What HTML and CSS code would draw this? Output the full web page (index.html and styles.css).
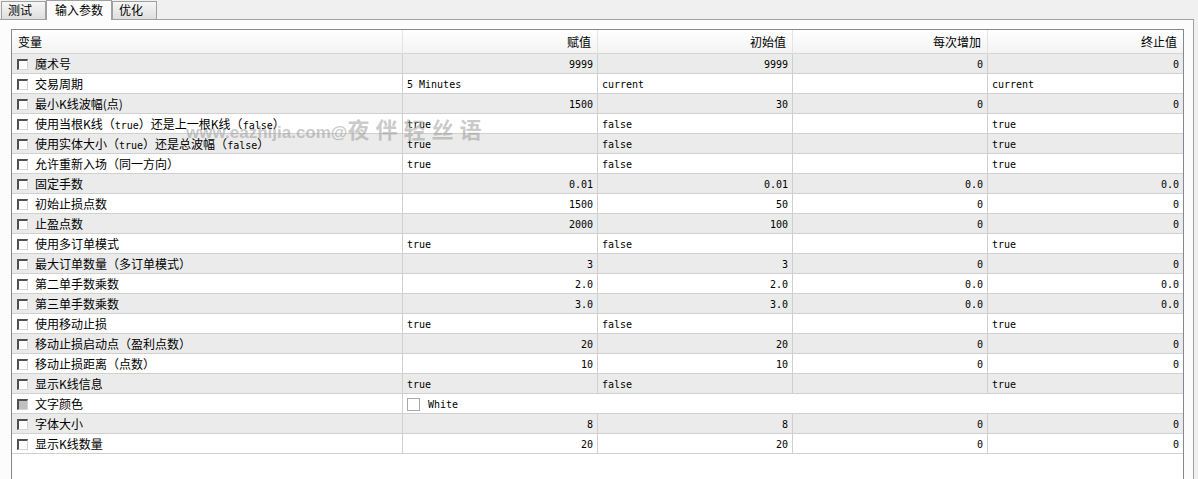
FILE: index.html
```html
<!DOCTYPE html>
<html lang="zh-CN">
<head>
    <meta charset="UTF-8">
    <title>输入参数</title>
    <link rel="stylesheet" href="styles.css">
</head>
<body>
    <div class="tabs">
        <div class="tab">测试</div>
        <div class="tab active">输入参数</div>
        <div class="tab">优化</div>
    </div>

    <div class="panel">
        <div class="listbox">
            <table class="params">
                <colgroup>
                    <col class="col-name">
                    <col class="col-val">
                    <col class="col-val">
                    <col class="col-val">
                    <col class="col-val">
                </colgroup>
                <thead>
                    <tr>
                        <th class="name">变量</th>
                        <th>赋值</th>
                        <th>初始值</th>
                        <th>每次增加</th>
                        <th class="last">终止值</th>
                    </tr>
                </thead>
                <tbody>
                    <tr class="odd">
                        <td class="name"><span class="check"></span>魔术号</td>
                        <td class="num">9999</td><td class="num">9999</td><td class="num">0</td><td class="num last">0</td>
                    </tr>
                    <tr>
                        <td class="name"><span class="check"></span>交易周期</td>
                        <td class="txt">5 Minutes</td><td class="txt">current</td><td class="txt"></td><td class="txt last">current</td>
                    </tr>
                    <tr class="odd">
                        <td class="name"><span class="check"></span>最小K线波幅(点)</td>
                        <td class="num">1500</td><td class="num">30</td><td class="num">0</td><td class="num last">0</td>
                    </tr>
                    <tr>
                        <td class="name"><span class="check"></span>使用当根K线（<span class="mono">true</span>）还是上一根K线（<span class="mono">false</span>）</td>
                        <td class="txt">true</td><td class="txt">false</td><td class="txt"></td><td class="txt last">true</td>
                    </tr>
                    <tr class="odd">
                        <td class="name"><span class="check"></span>使用实体大小（<span class="mono">true</span>）还是总波幅（<span class="mono">false</span>）</td>
                        <td class="txt">true</td><td class="txt">false</td><td class="txt"></td><td class="txt last">true</td>
                    </tr>
                    <tr>
                        <td class="name"><span class="check"></span>允许重新入场（同一方向）</td>
                        <td class="txt">true</td><td class="txt">false</td><td class="txt"></td><td class="txt last">true</td>
                    </tr>
                    <tr class="odd">
                        <td class="name"><span class="check"></span>固定手数</td>
                        <td class="num">0.01</td><td class="num">0.01</td><td class="num">0.0</td><td class="num last">0.0</td>
                    </tr>
                    <tr>
                        <td class="name"><span class="check"></span>初始止损点数</td>
                        <td class="num">1500</td><td class="num">50</td><td class="num">0</td><td class="num last">0</td>
                    </tr>
                    <tr class="odd">
                        <td class="name"><span class="check"></span>止盈点数</td>
                        <td class="num">2000</td><td class="num">100</td><td class="num">0</td><td class="num last">0</td>
                    </tr>
                    <tr>
                        <td class="name"><span class="check"></span>使用多订单模式</td>
                        <td class="txt">true</td><td class="txt">false</td><td class="txt"></td><td class="txt last">true</td>
                    </tr>
                    <tr class="odd">
                        <td class="name"><span class="check"></span>最大订单数量（多订单模式）</td>
                        <td class="num">3</td><td class="num">3</td><td class="num">0</td><td class="num last">0</td>
                    </tr>
                    <tr>
                        <td class="name"><span class="check"></span>第二单手数乘数</td>
                        <td class="num">2.0</td><td class="num">2.0</td><td class="num">0.0</td><td class="num last">0.0</td>
                    </tr>
                    <tr class="odd">
                        <td class="name"><span class="check"></span>第三单手数乘数</td>
                        <td class="num">3.0</td><td class="num">3.0</td><td class="num">0.0</td><td class="num last">0.0</td>
                    </tr>
                    <tr>
                        <td class="name"><span class="check"></span>使用移动止损</td>
                        <td class="txt">true</td><td class="txt">false</td><td class="txt"></td><td class="txt last">true</td>
                    </tr>
                    <tr class="odd">
                        <td class="name"><span class="check"></span>移动止损启动点（盈利点数）</td>
                        <td class="num">20</td><td class="num">20</td><td class="num">0</td><td class="num last">0</td>
                    </tr>
                    <tr>
                        <td class="name"><span class="check"></span>移动止损距离（点数）</td>
                        <td class="num">10</td><td class="num">10</td><td class="num">0</td><td class="num last">0</td>
                    </tr>
                    <tr class="odd">
                        <td class="name"><span class="check"></span>显示K线信息</td>
                        <td class="txt">true</td><td class="txt">false</td><td class="txt"></td><td class="txt last">true</td>
                    </tr>
                    <tr>
                        <td class="name"><span class="check disabled"></span>文字颜色</td>
                        <td class="txt last" colspan="4"><span class="swatch"></span>White</td>
                    </tr>
                    <tr class="odd">
                        <td class="name"><span class="check"></span>字体大小</td>
                        <td class="num">8</td><td class="num">8</td><td class="num">0</td><td class="num last">0</td>
                    </tr>
                    <tr>
                        <td class="name"><span class="check"></span>显示K线数量</td>
                        <td class="num">20</td><td class="num">20</td><td class="num">0</td><td class="num last">0</td>
                    </tr>
                </tbody>
            </table>
        </div>
    </div>

    <div class="watermark">www.eazhijia.com@<span class="wm-cjk">夜伴轻丝语</span></div>
</body>
</html>
```

FILE: styles.css
```css
body {
    margin: 0;
    background-color: #f0f0f0;
    font-family: "Noto Sans CJK SC", sans-serif;
    font-size: 12px;
    color: #000;
    overflow: hidden;
    height: 479px;
}

/* tab strip */
.tabs {
    display: flex;
    align-items: flex-end;
    height: 19px;
    padding-left: 1px;
}

.tab {
    box-sizing: border-box;
    height: 18px;
    min-width: 45px;
    padding: 0 6px;
    border: 1px solid #a0a0a0;
    border-bottom: none;
    background: linear-gradient(#f6f6f6, #dedede);
    line-height: 16px;
}

.tab.active {
    position: relative;
    z-index: 1;
    height: 20px;
    margin-bottom: -1px;
    padding: 0 8px;
    background: #fcfcfc;
    line-height: 18px;
}

/* panel + list */
.panel {
    box-sizing: border-box;
    width: 1194px;
    height: 470px;
    padding: 9px 0 0 11px;
    border-top: 1px solid #a0a0a0;
    border-right: 1px solid #a0a0a0;
    background-color: #fcfcfc;
}

.listbox {
    box-sizing: border-box;
    width: 1173px;
    height: 470px;
    border: 1px solid #828790;
    background-color: #fff;
}

.params {
    width: 1171px;
    table-layout: fixed;
    border-collapse: separate;
    border-spacing: 0;
}

.col-name {
    width: 391px;
}

.col-val {
    width: 195px;
}

th, td {
    box-sizing: border-box;
    white-space: nowrap;
    overflow: hidden;
}

th {
    height: 24px;
    padding: 0 6px;
    font-weight: normal;
    text-align: right;
    border-right: 1px solid #e4e4e4;
    border-bottom: 1px solid #d5d5d5;
    background: linear-gradient(#ffffff, #f3f3f3);
}

th.name {
    text-align: left;
}

td {
    height: 20px;
    padding: 0 4px;
    border-right: 1px solid #d0d0d0;
    border-bottom: 1px solid #d0d0d0;
}

th.last, td.last {
    border-right: none;
}

tr.odd td {
    background-color: #ebebeb;
}

td.name {
    padding-left: 5px;
}

.num, .txt, .mono {
    font-family: "DejaVu Sans Mono", monospace;
    font-size: 10px;
}

.num, .txt {
    padding-top: 1px;
}

.num {
    text-align: right;
}

.check {
    display: inline-block;
    box-sizing: border-box;
    width: 11px;
    height: 11px;
    margin-right: 7px;
    vertical-align: -1px;
    border-top: 2px solid #505050;
    border-left: 2px solid #505050;
    border-right: 1px solid #d4d4d4;
    border-bottom: 1px solid #d4d4d4;
    background-color: #fff;
}

.check.disabled {
    background-color: #c0c0c0;
}

.swatch {
    display: inline-block;
    box-sizing: border-box;
    width: 13px;
    height: 13px;
    margin-right: 8px;
    vertical-align: middle;
    border: 1px solid #a8a8a8;
    background-color: #fff;
}

/* watermark over the list */
.watermark {
    position: absolute;
    left: 186px;
    top: 112px;
    font-family: "Liberation Sans", sans-serif;
    font-size: 17px;
    font-weight: bold;
    color: rgba(150, 150, 150, 0.5);
    white-space: nowrap;
}

.wm-cjk {
    font-family: "Noto Sans CJK SC", sans-serif;
    font-size: 22px;
    font-weight: bold;
    letter-spacing: 6px;
}
```
